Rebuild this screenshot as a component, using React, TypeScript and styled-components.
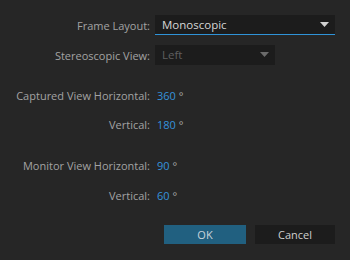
import styled, { createGlobalStyle } from 'styled-components'

const GlobalStyle = createGlobalStyle`
    html, body {
        margin: 0;
        padding: 0;
        background: #262626;
    }
    body {
        font-family: "Open Sans", "Liberation Sans", sans-serif;
        font-size: 11px;
        color: #a3a3a3;
    }
`

interface Field {
    label: string
    value: string
    gap: number
}

const fields: Field[] = [
    { label: 'Captured View Horizontal:', value: '360', gap: 20 },
    { label: 'Vertical:', value: '180', gap: 9 },
    { label: 'Monitor View Horizontal:', value: '90', gap: 21 },
    { label: 'Vertical:', value: '60', gap: 10 },
]

const Arrow = ({ color }: { color: string }) => (
    <svg width="9" height="5" viewBox="0 0 9 5">
        <polygon points="0,0 9,0 4.5,5" fill={color} />
    </svg>
)

const App = () => {
    return <Dialog>
        <GlobalStyle />
        <Row $gap={15}>
            <Label>Frame Layout:</Label>
            <Select $width={180} $active>
                <span>Monoscopic</span>
                <Arrow color="#d2d2d2" />
            </Select>
        </Row>
        <Row $gap={10}>
            <Label>Stereoscopic View:</Label>
            <Select $width={120}>
                <span>Left</span>
                <Arrow color="#6b6b6b" />
            </Select>
        </Row>
        {fields.map((f, i) => (
            <Row key={i} $gap={f.gap}>
                <Label>{f.label}</Label>
                <Value>
                    <Number>{f.value}</Number> °
                </Value>
            </Row>
        ))}
        <Buttons>
            <Button $primary>OK</Button>
            <Button>Cancel</Button>
        </Buttons>
    </Dialog>
}

export default App

const Dialog = styled.div`
    width: 350px;
    height: 260px;
    display: flex;
    flex-direction: column;
    box-sizing: border-box;
`
const Row = styled.div<{ $gap: number }>`
    display: grid;
    grid-template-columns: 150px auto;
    column-gap: 5px;
    align-items: center;
    height: 20px;
    margin-top: ${p => p.$gap}px;
`
const Label = styled.div`
    text-align: right;
    white-space: nowrap;
    color: #a3a3a3;
`
const Select = styled.div<{ $width: number; $active?: boolean }>`
    width: ${p => p.$width}px;
    height: 20px;
    box-sizing: border-box;
    display: flex;
    align-items: center;
    justify-content: space-between;
    padding: 0 6px 0 7px;
    background: #1c1c1c;
    color: ${p => p.$active ? '#d6d6d6' : '#5f5f5f'};
    border-bottom: 1px solid ${p => p.$active ? '#2f93d8' : 'transparent'};
    font-size: 11.5px;
`
const Value = styled.div`
    padding-left: 2px;
    color: #a3a3a3;
`
const Number = styled.span`
    color: #3593dc;
`
const Buttons = styled.div`
    display: flex;
    justify-content: flex-end;
    gap: 9px;
    margin-top: 20px;
    padding-right: 15px;
`
const Button = styled.div<{ $primary?: boolean }>`
    width: ${p => p.$primary ? 82 : 80}px;
    height: 19px;
    display: flex;
    align-items: center;
    justify-content: center;
    background: ${p => p.$primary ? '#216080' : '#1c1c1c'};
    color: ${p => p.$primary ? '#c8d4dc' : '#cfcfcf'};
    font-size: 11px;
`
